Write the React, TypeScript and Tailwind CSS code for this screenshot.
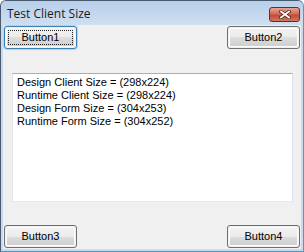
import React from 'react';

const Btn = ({ label, focused = false }: { label: string; focused?: boolean }) => (
  <div
    className={`w-[73px] h-[23px] rounded-[3px] border p-px ${
      focused ? 'border-[#3c7fb1] shadow-[0_0_0_1px_#a8d8f0]' : 'border-[#707070]'
    }`}
  >
    <div className="relative w-full h-full rounded-[2px] border border-[#fcfcfc] bg-[linear-gradient(#f2f2f2_0%,#ebebeb_50%,#dddddd_50%,#cfcfcf_100%)] flex items-center justify-center">
      <span className="leading-[13px] text-[11px] text-black">{label}</span>
      {focused && (
        <div className="absolute inset-[1px] border border-dotted border-[#222]" />
      )}
    </div>
  </div>
);

export default function App() {
  const lines = [
    'Design Client Size = (298x224)',
    'Runtime Client Size = (298x224)',
    'Design Form Size = (304x253)',
    'Runtime Form Size = (304x252)',
  ];

  return (
    <div className="w-[304px] h-[252px] overflow-hidden font-['Liberation_Sans',sans-serif] bg-[#c9daee] rounded-t-[6px] border border-[#4a5a6e] border-r-[#3aa0e0] border-b-[#3a9ad8] flex flex-col">
      {/* title bar */}
      <div className="h-[24px] shrink-0 flex items-center justify-between pl-[6px] pr-[3px] bg-[linear-gradient(#b8cfea,#c6d8ee_60%,#cfdff1)]">
        <span className="font-['Open_Sans',sans-serif] text-[12px] text-[#1b1b1b] leading-none pt-px">
          Test Client Size
        </span>
        <div className="w-[31px] h-[15px] mt-[2px] rounded-[3px] border border-[#6b2a24] bg-[linear-gradient(#e8a497,#d46a58_45%,#c44a36_55%,#d2775f)] flex items-center justify-center">
          <svg width="12" height="9" viewBox="0 0 12 9">
            <path
              d="M2 1.5 L10 7.5 M10 1.5 L2 7.5"
              stroke="#4a2a26"
              strokeWidth="3.4"
              strokeLinecap="square"
            />
            <path
              d="M2 1.5 L10 7.5 M10 1.5 L2 7.5"
              stroke="#ffffff"
              strokeWidth="1.8"
              strokeLinecap="square"
            />
          </svg>
        </div>
      </div>

      {/* client area */}
      <div className="mx-[2px] w-[298px] h-[224px] bg-[#f0f0f0] p-px flex flex-col">
        <div className="flex justify-between">
          <Btn label="Button1" focused />
          <Btn label="Button2" />
        </div>

        <div className="mt-[24px] ml-[8px] w-[281px] h-[129px] bg-white border border-[#abadb3] border-r-[#dbdfe6] border-b-[#e3e9ef] border-l-[#e2e3ea] pl-[4px] pt-[2px] text-[11px] leading-[13px] text-black">
          {lines.map((l) => (
            <div key={l}>{l}</div>
          ))}
        </div>

        <div className="flex-1" />

        <div className="flex justify-between">
          <Btn label="Button3" />
          <Btn label="Button4" />
        </div>
      </div>
    </div>
  );
}
